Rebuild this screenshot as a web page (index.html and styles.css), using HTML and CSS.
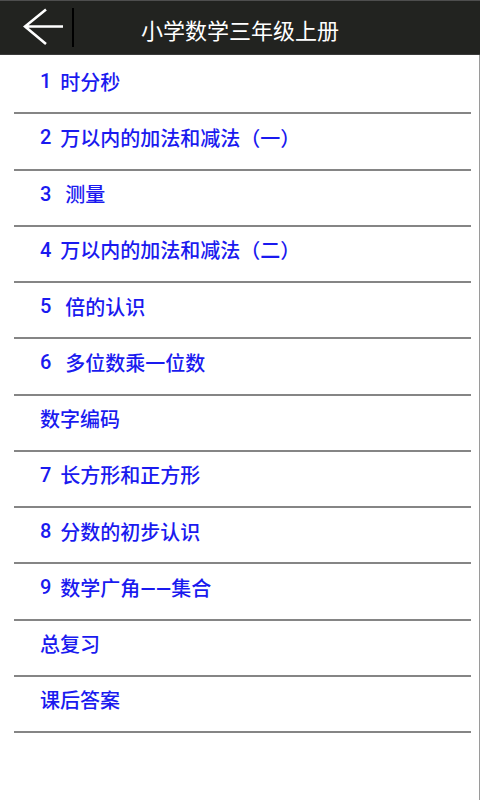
FILE: index.html
```html
<!DOCTYPE html>
<html lang="zh-CN">
<head>
<meta charset="utf-8">
<title>小学数学三年级上册</title>
<link rel="stylesheet" href="styles.css">
</head>
<body>
<header class="bar">
  <div class="bar-left">
    <span class="back">
      <svg width="42" height="40" viewBox="0 0 42 40" aria-hidden="true">
        <path d="M40 18.5 H2.5 M23 1.5 L2 18.5 L23 36" fill="none" stroke="#ffffff" stroke-width="2.6" stroke-linecap="butt" stroke-linejoin="miter"/>
      </svg>
    </span>
    <span class="sep"></span>
  </div>
  <h1 class="title">小学数学三年级上册</h1>
  <div class="bar-right"></div>
</header>
<main class="content">
  <ul class="menu">
    <li class="item"><span class="num">1</span> 时分秒</li>
    <li class="item"><span class="num">2</span> 万以内的加法和减法（一）</li>
    <li class="item"><span class="num">3</span>  测量</li>
    <li class="item"><span class="num">4</span> 万以内的加法和减法（二）</li>
    <li class="item"><span class="num">5</span>  倍的认识</li>
    <li class="item"><span class="num">6</span>  多位数乘一位数</li>
    <li class="item">数字编码</li>
    <li class="item"><span class="num">7</span> 长方形和正方形</li>
    <li class="item"><span class="num">8</span> 分数的初步认识</li>
    <li class="item"><span class="num">9</span> 数学广角——集合</li>
    <li class="item">总复习</li>
    <li class="item">课后答案</li>
  </ul>
</main>
</body>
</html>
```
FILE: styles.css
```css
html, body {
  margin: 0;
  padding: 0;
  background: #ffffff;
}
body {
  width: 480px;
  height: 800px;
  overflow: hidden;
  font-family: Roboto, "Noto Sans CJK SC", sans-serif;
}
.bar {
  box-sizing: border-box;
  height: 55px;
  background: #222320;
  border-top: 1px solid #4e4e4e;
  border-bottom: 1px solid #3a3a3a;
  display: grid;
  grid-template-columns: 1fr auto 1fr;
  align-items: center;
}
.bar-left {
  display: flex;
  align-items: center;
  padding-left: 23px;
  gap: 7px;
}
.back {
  display: flex;
  width: 42px;
  height: 40px;
}
.sep {
  width: 2px;
  height: 39px;
  background: #000000;
}
.title {
  margin: 0;
  padding-top: 3px;
  font-family: "Noto Sans CJK SC", sans-serif;
  font-size: 22px;
  font-weight: normal;
  line-height: 1;
  color: #ffffff;
  white-space: nowrap;
}
.content {
  box-sizing: border-box;
  height: 745px;
  padding: 3px 8px 0 14px;
  border-right: 1px solid #9a9a9a;
}
.menu {
  list-style: none;
  margin: 0;
  padding: 0;
}
.item {
  box-sizing: border-box;
  height: 56.25px;
  border-bottom: 2px solid #858585;
  display: flex;
  align-items: center;
  padding: 0 0 8px 26px;
  font-size: 20px;
  font-weight: 500;
  color: #1a1aef;
  white-space: pre;
}
.num {
  padding-right: 4px;
}
```
